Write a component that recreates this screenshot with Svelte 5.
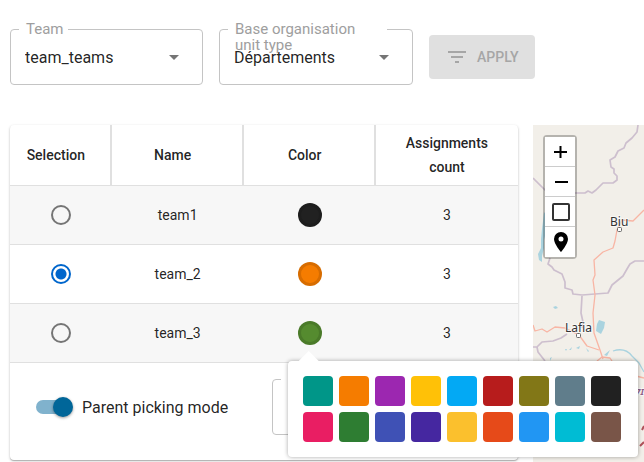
<script>
  const fields = [
    { id: 'team', label: 'Team', value: 'team_teams' },
    { id: 'unit-type', label: 'Base organisation unit type', value: 'Départements' }
  ];

  const teams = [
    { name: 'team1', color: '#212121', count: 3 },
    { name: 'team_2', color: '#f57c00', count: 3 },
    { name: 'team_3', color: '#558b2f', count: 3 }
  ];

  const palette = [
    '#009688', '#f57c00', '#9c27b0', '#ffc107', '#03a9f4', '#b71c1c', '#827717', '#607d8b', '#212121',
    '#e91e63', '#2e7d32', '#3f51b5', '#4527a0', '#fbc02d', '#e64a19', '#2196f3', '#00bcd4', '#795548'
  ];

  let selected = $state('team_2');
  let parentPicking = $state(true);
  let openPicker = $state('team_3');
  let colors = $state(Object.fromEntries(teams.map((t) => [t.name, t.color])));
</script>

<main>
  <form class="filters" onsubmit={(e) => e.preventDefault()}>
    {#each fields as field}
      <div class="field">
        <label for={field.id}>{field.label}</label>
        <select id={field.id}><option>{field.value}</option></select>
        <svg class="caret" viewBox="0 0 24 24" aria-hidden="true"><path d="M7 10l5 5 5-5z" /></svg>
      </div>
    {/each}
    <button class="apply" disabled>
      <svg viewBox="0 0 24 24" aria-hidden="true"><path d="M10 18h4v-2h-4v2zM3 6v2h18V6H3zm3 7h12v-2H6v2z" /></svg>
      APPLY
    </button>
  </form>

  <div class="content">
    <section class="card">
      <table>
        <thead>
          <tr>
            <th class="c-select">Selection</th>
            <th class="c-mid">Name</th>
            <th class="c-mid">Color</th>
            <th>Assignments count</th>
          </tr>
        </thead>
        <tbody>
          {#each teams as team}
            <tr>
              <td>
                <input type="radio" name="team" value={team.name} bind:group={selected} aria-label={team.name} />
              </td>
              <td>{team.name}</td>
              <td>
                <div class="picker">
                  <button
                    class="dot"
                    style:background-color={colors[team.name]}
                    aria-label="Color of {team.name}"
                    onclick={() => (openPicker = openPicker === team.name ? '' : team.name)}
                  ></button>
                  {#if openPicker === team.name}
                    <div class="popover">
                      {#each palette as color}
                        <button
                          class="swatch"
                          style:background-color={color}
                          aria-label={color}
                          onclick={() => (colors[team.name] = color)}
                        ></button>
                      {/each}
                    </div>
                  {/if}
                </div>
              </td>
              <td>{team.count}</td>
            </tr>
          {/each}
        </tbody>
      </table>
      <div class="options">
        <label class="toggle">
          <input type="checkbox" role="switch" bind:checked={parentPicking} />
          Parent picking mode
        </label>
        <div class="field parent">
          <select aria-label="Parent"><option></option></select>
        </div>
      </div>
    </section>

    <section class="map" aria-label="Map">
      <svg class="tiles" viewBox="0 0 111 337" preserveAspectRatio="xMinYMin slice">
        <g class="water">
          <path d="M11 87l2 3-1 9 1 8-2 8 0 8-2 8 0 6-3-2-1-6 3-6 0-9 1-10 1-8z" />
          <path d="M66 195l6 2-1 6-3 6-5-3 1-7z" />
          <path d="M20 182l3-1 2 2-3 1zM32 224l2 0-1 2zM36 225l3-3-1 3zM43 223l4-2-1 3zM53 223l3 3-1 1zM17 233l2-1-2 4zM71 230l6-5-3 6z" />
          <path class="river" d="M80 226q12-4 19 5l7 7 5 9" />
        </g>
        <g class="border">
          <path d="M105 0l-1 7-5 6-6 5-2 5-6 3-3 6-5 3 1 7 3 2 0 4 3 3 0 4-4 3-10 0-7 7-4 3-4-2-3 2-18 0-10-2M0 53l13 13" />
          <path d="M17 133l-2 6 4 3 2 3 8 4 3 8 0 6 7 2 1 4 9 1 26-2 4-8 11-9 4-7 3-5 5-3 9 0" />
          <path d="M49 171l-1 17 2 9-1 6M34 209l-6 4-8 3-11 1-5 5 1 5 7 9M0 222l4 0M44 312l-4 10-4 3" />
        </g>
        <g class="road">
          <path d="M111 85l-11 11-11-1-5 10-2 11-2 7-10 4-9 8 1 15-2 5 2 15-2 18 1 20 6 17 3 9" />
          <path d="M0 200l2 6 7-2 5 3 8-5 10 1 14 7 8 11 12 4M64 236l5-4 8 1 2 3M103 251l8 2" />
        </g>
        <g class="town">
          <rect x="84.500" y="102.500" width="4" height="4" rx="1" />
          <rect x="43.500" y="208.500" width="4" height="4" rx="1" />
        </g>
        <text x="77" y="101">Biu</text>
        <text x="32" y="207">Lafia</text>
        <path class="mark" d="M111 317l-4 4M111 301l-2 4" />
        <text class="country" x="111" y="270">7I</text>
      </svg>
      <div class="controls">
        <button aria-label="Zoom in"><svg viewBox="0 0 30 29"><path class="line" d="M9 15h13M15.500 9v12" /></svg></button>
        <button aria-label="Zoom out"><svg viewBox="0 0 30 29"><path class="line" d="M10 15h13" /></svg></button>
        <button aria-label="Fit to bounds"><svg viewBox="0 0 30 29"><rect class="box" x="8" y="7" width="16" height="16" rx="1" /></svg></button>
        <button aria-label="Center marker"><svg viewBox="0 0 30 29"><path d="M16 5a7 7 0 0 0-7 7c0 5 7 13 7 13s7-8 7-13a7 7 0 0 0-7-7zm0 4.500a2.500 2.500 0 1 1 0 5 2.500 2.500 0 0 1 0-5z" /></svg></button>
      </div>
    </section>
  </div>
</main>

<style>
  :global(body) {
    margin: 0;
    background: #fff;
    overflow: hidden;
  }
  main {
    box-sizing: border-box;
    min-height: 100vh;
    padding: 29px 0 0 10px;
    font-family: Roboto, sans-serif;
    color: rgba(0, 0, 0, 0.87);
  }
  button {
    font-family: inherit;
    padding: 0;
    border: 0;
    cursor: pointer;
  }
  .filters {
    display: grid;
    grid-template-columns: 193fr 194fr 215fr;
    gap: 16px;
    align-items: center;
  }
  .field {
    position: relative;
    height: 56px;
  }
  .field label {
    position: absolute;
    z-index: 1;
    top: -8px;
    left: 9px;
    max-width: calc(100% - 35px);
    box-sizing: border-box;
    padding: 0 4px 0 7px;
    font-size: 15px;
    line-height: 16px;
    color: #9e9e9e;
    pointer-events: none;
  }
  .field label::before {
    content: '';
    position: absolute;
    z-index: -1;
    top: 8px;
    left: 0;
    width: 100%;
    height: 1px;
    background: #fff;
  }
  select {
    appearance: none;
    width: 100%;
    height: 100%;
    padding: 0 32px 0 14px;
    border: 1px solid #c4c4c4;
    border-radius: 4px;
    background: transparent;
    font: 16px Roboto, sans-serif;
    color: inherit;
  }
  .caret {
    position: absolute;
    right: 17px;
    top: 16px;
    width: 24px;
    height: 24px;
    fill: #757575;
    pointer-events: none;
  }
  .apply {
    justify-self: start;
    display: flex;
    align-items: center;
    gap: 8px;
    height: 44px;
    padding: 0 16px;
    border-radius: 4px;
    background: #e0e0e0;
    color: #a6a6a6;
    font-size: 14px;
    font-weight: 500;
  }
  .apply svg {
    width: 24px;
    height: 24px;
    fill: currentColor;
  }
  .content {
    display: grid;
    grid-template-columns: 508fr 111fr;
    gap: 15px;
    margin-top: 40px;
  }
  .card {
    align-self: start;
    border-radius: 4px;
    box-shadow: 0 1px 1px rgba(0, 0, 0, 0.2), 0 1px 3px rgba(0, 0, 0, 0.2);
  }
  table {
    width: 100%;
    table-layout: fixed;
    border-collapse: separate;
    border-spacing: 0;
    font-size: 14px;
    line-height: 24px;
    text-align: center;
  }
  th {
    box-sizing: border-box;
    height: 61px;
    padding: 0 8px 0 0;
    border-right: 2px solid #e0e0e0;
    border-bottom: 1px solid #e0e0e0;
    font-weight: 500;
  }
  th:last-child {
    padding: 0 20px;
    border-right: 0;
  }
  .c-select {
    width: 20%;
  }
  .c-mid {
    width: 26%;
  }
  td {
    box-sizing: border-box;
    height: 59px;
    padding: 0;
    border-bottom: 1px solid #e0e0e0;
  }
  tbody tr:nth-child(odd) {
    background: #f7f7f7;
  }
  input[type='radio'] {
    appearance: none;
    display: block;
    width: 20px;
    height: 20px;
    margin: 0 auto;
    border: 2px solid #757575;
    border-radius: 50%;
  }
  input[type='radio']:checked {
    border-color: #0066cc;
    background: radial-gradient(circle, #0066cc 5px, transparent 6px);
  }
  .picker {
    position: relative;
    width: 24px;
    height: 24px;
    margin: 0 auto;
  }
  .dot {
    display: block;
    width: 24px;
    height: 24px;
    border: 3px solid rgba(0, 0, 0, 0.12);
    border-radius: 50%;
  }
  .popover {
    position: absolute;
    z-index: 3;
    top: 40px;
    left: -10px;
    box-sizing: border-box;
    width: 350px;
    display: flex;
    flex-wrap: wrap;
    gap: 6px;
    padding: 15px 11px 15px 15px;
    border-radius: 4px;
    background: #fff;
    box-shadow: 0 0 4px rgba(0, 0, 0, 0.35);
  }
  .popover::before {
    content: '';
    position: absolute;
    top: -10px;
    left: 11px;
    width: 20px;
    height: 10px;
    background: #fff;
    clip-path: polygon(50% 0, 100% 100%, 0 100%);
  }
  .swatch {
    width: 30px;
    height: 30px;
    border-radius: 4px;
  }
  .options {
    display: flex;
    align-items: center;
    justify-content: space-between;
    height: 88px;
    padding: 0 10px 9px 26px;
  }
  .toggle {
    display: flex;
    align-items: center;
    gap: 12px;
    font-size: 16px;
  }
  .toggle input {
    appearance: none;
    position: relative;
    width: 34px;
    height: 14px;
    margin: 0;
    border-radius: 7px;
    background: #bdbdbd;
  }
  .toggle input::after {
    content: '';
    position: absolute;
    top: -3px;
    left: -3px;
    width: 20px;
    height: 20px;
    border-radius: 50%;
    background: #fafafa;
    box-shadow: 0 1px 3px rgba(0, 0, 0, 0.4);
  }
  .toggle input:checked {
    background: #80b2cd;
  }
  .toggle input:checked::after {
    left: 17px;
    background: #006699;
  }
  .parent {
    width: 236px;
  }
  .parent::before {
    content: '';
    position: absolute;
    top: 0;
    left: 9px;
    width: 48px;
    height: 1px;
    background: #fff;
  }
  .map {
    position: relative;
    min-height: 337px;
    overflow: hidden;
    background: #f2efe9;
  }
  .tiles {
    position: absolute;
    inset: 0;
    width: 100%;
    height: 100%;
    fill: none;
    stroke-linejoin: round;
  }
  .border {
    stroke: #cdbfce;
    stroke-width: 1.700;
  }
  .road {
    stroke: #f8b5a4;
    stroke-width: 1.300;
  }
  .water {
    fill: #aad3df;
  }
  .river {
    fill: none;
    stroke: #aad3df;
    stroke-width: 1.300;
  }
  .town {
    fill: #fff;
    stroke: #666;
  }
  .tiles text {
    font: 12px 'Noto Sans', sans-serif;
    fill: #333;
    stroke: #fff;
    stroke-width: 2;
    stroke-opacity: 0.6;
    paint-order: stroke;
  }
  .tiles .country {
    font-weight: 700;
    font-style: italic;
    font-size: 9px;
    text-anchor: end;
    fill: #8d618b;
  }
  .mark {
    stroke: #b0525a;
    stroke-width: 2;
  }
  .controls {
    position: absolute;
    top: 10px;
    left: 10px;
    display: flex;
    flex-direction: column;
    border: 2px solid rgba(0, 0, 0, 0.25);
    border-radius: 4px;
    background-clip: padding-box;
  }
  .controls button {
    width: 30px;
    height: 30px;
    border-bottom: 1px solid #ccc;
    background: #fff;
  }
  .controls button:last-child {
    border-bottom-color: #fff;
  }
  .controls svg {
    display: block;
    width: 30px;
    height: 29px;
  }
  .controls .line {
    stroke: #000;
    stroke-width: 2;
  }
  .controls .box {
    fill: none;
    stroke: #333;
    stroke-width: 2;
  }
  .controls path {
    fill-rule: evenodd;
  }
</style>
